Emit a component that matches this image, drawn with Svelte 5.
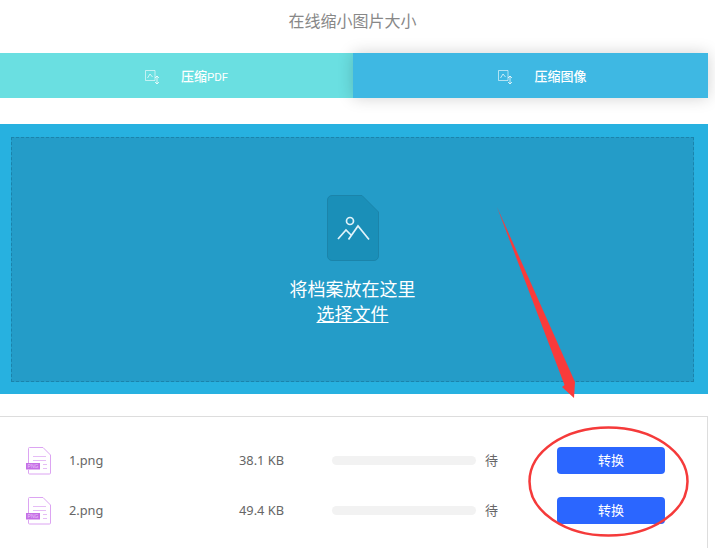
<script>
  const tabs = [
    { label: '压缩', suffix: 'PDF', active: false },
    { label: '压缩图像', suffix: '', active: true }
  ];
  const files = [
    { name: '1.png', size: '38.1 KB' },
    { name: '2.png', size: '49.4 KB' }
  ];
</script>

<div class="page">
  <h1 class="title">在线缩小图片大小</h1>

  <div class="tabs">
    {#each tabs as tab}
      <div class="tab" class:active={tab.active}>
        <svg class="tab-icon" width="15" height="14" viewBox="0 0 15 14" fill="none" stroke="#fff" stroke-width="1">
          <path d="M.5.5h9.500v10H.5z" opacity=".6" />
          <path d="M2.500 8l2.500-4 2.500 3" opacity=".7" />
          <path d="M12 6v8M10 8l2-2 2 2M10 12l2 2 2-2" opacity=".75" />
        </svg>
        <span class="tab-label">{tab.label}<small>{tab.suffix}</small></span>
      </div>
    {/each}
  </div>

  <div class="drop">
    <div class="drop-inner">
      <svg class="drop-icon" width="52" height="66" viewBox="0 0 52 66">
        <path d="M5 .5h30L51.500 17v44a4.500 4.500 0 0 1-4.500 4.500H5A4.500 4.500 0 0 1 .5 61V5A4.500 4.500 0 0 1 5 .5z" fill="#1a8fb8" stroke="#1b84aa" />
        <circle cx="23" cy="26" r="3.500" fill="none" stroke="#e0f3fa" stroke-width="1.700" />
        <path d="M11 44l8-9 5 5M21.500 44.500L31 31l11 13.500" fill="none" stroke="#e0f3fa" stroke-width="1.700" />
      </svg>
      <p class="drop-text">将档案放在这里</p>
      <a class="drop-link" href="#top">选择文件</a>
    </div>
  </div>

  <div class="list">
    {#each files as file}
      <div class="row">
        <svg class="file-icon" width="26" height="28" viewBox="0 0 26 28" fill="none">
          <path d="M2.500 16V1.500a1 1 0 0 1 1-1h13.500l7.500 7.500v18a1 1 0 0 1-1 1h-20a1 1 0 0 1-1-1v-3" fill="#fff" stroke="#dca4f2" />
          <path d="M7 9.500h13M7 13.500h13M17 17.500h4M17 21.500h4" stroke="#e6bdf6" />
          <rect x="0" y="16" width="14" height="6.500" fill="#c56fe6" />
          <text class="png-tag" x="7" y="21" text-anchor="middle">PNG</text>
        </svg>
        <span class="name">{file.name}</span>
        <span class="size">{file.size}</span>
        <div class="bar"></div>
        <span class="status">待</span>
        <button class="convert">转换</button>
      </div>
    {/each}
  </div>

  <svg class="marks" width="715" height="548" viewBox="0 0 715 548" fill="none">
    <path d="M497 207L575 382 574 398 562 387 564.500 385z" fill="#f93b3b" />
    <ellipse cx="608.500" cy="481.500" rx="79" ry="54" stroke="#f53a3a" stroke-width="2.500" />
  </svg>
</div>

<style>
  :global(body) {
    margin: 0;
    background: #fff;
  }

  .page {
    position: relative;
    width: 715px;
    height: 548px;
    overflow: hidden;
    font-family: "Noto Sans CJK SC", "Noto Sans", sans-serif;
  }

  .title {
    margin: 0;
    width: 705px;
    padding-top: 8px;
    height: 53px;
    box-sizing: border-box;
    font-size: 16px;
    line-height: 24px;
    font-weight: 400;
    text-align: center;
    color: #888;
  }

  .tabs {
    display: flex;
    width: 708px;
    height: 45px;
  }

  .tab {
    width: 353px;
    box-sizing: border-box;
    display: flex;
    align-items: center;
    justify-content: center;
    gap: 21px;
    padding-left: 20px;
    background: #6adfe1;
    color: #fff;
    font-size: 13px;
    font-weight: 500;
  }

  .tab.active {
    width: 355px;
    padding-left: 24px;
    background: #3eb8e3;
    box-shadow: 0 0 16px rgba(0, 0, 0, 0.18);
    position: relative;
  }

  .tab-icon {
    flex: none;
    margin-top: 2px;
  }

  .tab-label small {
    font-family: "Roboto", sans-serif;
    font-size: 11.5px;
    font-weight: 400;
  }

  .drop {
    width: 708px;
    height: 270px;
    margin-top: 26px;
    padding: 13px 14px 12px 11px;
    box-sizing: border-box;
    background: #27b1e0;
  }

  .drop-inner {
    height: 100%;
    box-sizing: border-box;
    border: 1px dashed #1b83ab;
    background: #249cc8;
    display: flex;
    flex-direction: column;
    align-items: center;
    padding-top: 57px;
    color: #fff;
  }

  .drop-icon {
    display: block;
  }

  .drop-text {
    margin: 15px 0 0;
    font-size: 18px;
    line-height: 25px;
  }

  .drop-link {
    font-size: 18px;
    line-height: 25px;
    color: #fff;
    text-decoration: underline;
  }

  .list {
    width: 708px;
    height: 132px;
    margin-top: 22px;
    padding: 30px 0 0 26px;
    box-sizing: border-box;
    border-top: 1px solid #ddd;
    border-right: 1px solid #ddd;
    display: flex;
    flex-direction: column;
    gap: 23px;
  }

  .row {
    display: flex;
    align-items: center;
    height: 27px;
    font-size: 13px;
    color: #666;
  }

  .file-icon {
    flex: none;
    margin-right: 17px;
  }

  .png-tag {
    font-family: "Liberation Sans", sans-serif;
    font-size: 5px;
    fill: #eccbf8;
  }

  .name {
    width: 130px;
    padding-bottom: 2px;
    font-family: "Noto Sans", sans-serif;
    font-size: 12.8px;
  }

  .size {
    width: 84px;
    padding-bottom: 2px;
    white-space: nowrap;
    margin-left: 40px;
    margin-right: 9px;
    font-family: "Noto Sans", sans-serif;
    font-size: 12.8px;
  }

  .bar {
    width: 144px;
    height: 9px;
    border-radius: 5px;
    background: #f2f2f2;
  }

  .status {
    margin-left: 9px;
    width: 72px;
    padding-bottom: 2px;
  }

  .convert {
    width: 108px;
    height: 27px;
    padding: 0 0 2px;
    border: none;
    border-radius: 4px;
    background: #2b66ff;
    color: #fff;
    font-family: inherit;
    font-size: 13px;
  }

  .marks {
    position: absolute;
    left: 0;
    top: 0;
    pointer-events: none;
  }
</style>
